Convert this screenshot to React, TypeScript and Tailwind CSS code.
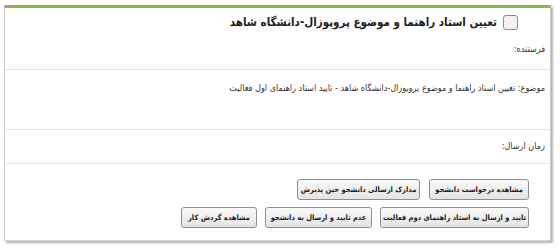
export default function App() {
  return (
    <div className="h-[252px] w-[560px] bg-white pl-[4px] pr-[9px] pt-[5px] font-['DejaVu_Sans_Condensed','DejaVu_Sans',sans-serif]" dir="rtl">
      <div className="h-[236px] border-x border-[#c8c8c8] border-b border-b-[#d8d8d8] border-t-[3px] border-t-[#8ab84c] bg-white shadow-[2px_2px_2px_rgba(0,0,0,0.3)]">
        {/* Header */}
        <div className="flex items-center gap-[6px] pr-[32px] pt-[5px]">
          <span className="h-[15px] w-[15px] rounded-[3px] border border-[#8a8a8a] bg-[#f2f2f2]" />
          <h1 className="text-[11.5px] font-bold leading-[18px] text-[#222]">
            تعیین استاد راهنما و موضوع پروپوزال-دانشگاه شاهد
          </h1>
        </div>
        <div className="h-[38px] pr-[5px] pt-[12px] text-[9px] leading-[13px] text-[#333]">فرستنده:</div>

        <div className="h-[60px] border-t border-[#e4e4e4] pr-[5px] pt-[12px] text-[9px] leading-[13px] text-[#333]">
          موضوع: تعیین استاد راهنما و موضوع پروپوزال-دانشگاه شاهد - تایید استاد راهنمای اول فعالیت
        </div>

        <div className="h-[34px] border-t border-[#e4e4e4] pr-[5px] pt-[10px] text-[9px] leading-[13px] text-[#333]">زمان ارسال:</div>

        {/* Actions */}
        <div className="flex flex-col gap-[7px] border-t border-[#e4e4e4] pr-[21px] pt-[15px]">
          <div className="flex gap-[9px]">
            <Btn className="w-[100px]">مشاهده درخواست دانشجو</Btn>
            <Btn className="w-[123px]">مدارک ارسالی دانشجو حین پذیرش</Btn>
          </div>
          <div className="flex gap-[8px]">
            <Btn className="w-[149px]">تایید و ارسال به استاد راهنمای دوم فعالیت</Btn>
            <Btn className="w-[107px]">عدم تایید و ارسال به دانشجو</Btn>
            <Btn className="w-[76px]">مشاهده گردش کار</Btn>
          </div>
        </div>
      </div>
    </div>
  );
}

function Btn({ children, className }: { children: React.ReactNode; className: string }) {
  return (
    <button
      className={`flex h-[21px] shrink-0 items-center justify-center overflow-hidden whitespace-nowrap rounded-[3px] border border-[#8f8f8f] bg-gradient-to-b from-[#fafafa] to-[#e4e4e4] text-[7.5px] font-bold text-[#222] ${className}`}
    >
      {children}
    </button>
  );
}
